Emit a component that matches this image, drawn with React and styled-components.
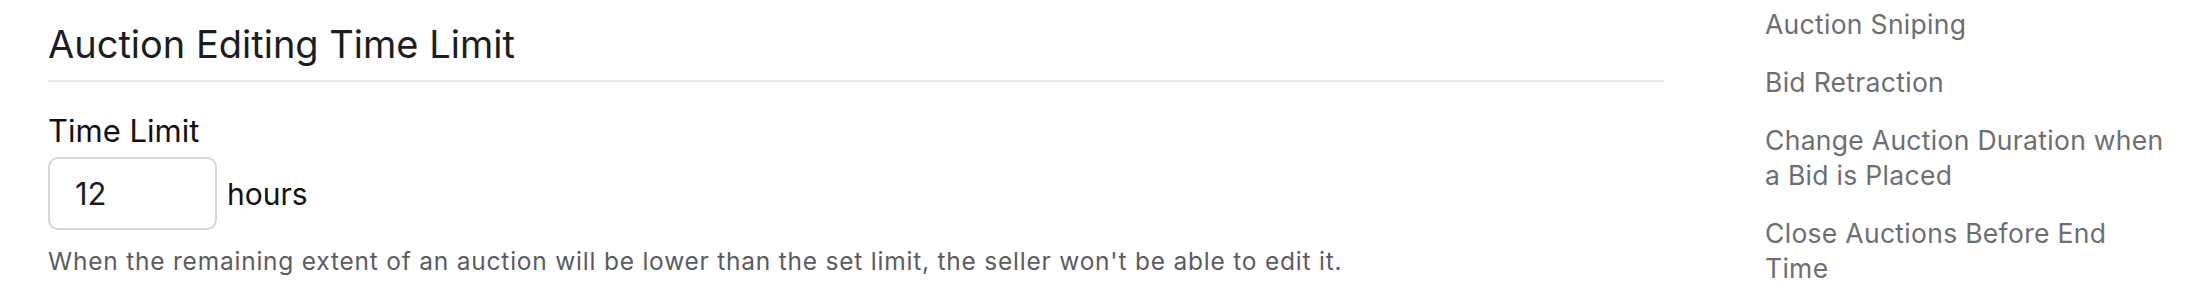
import React from 'react';
import styled, { createGlobalStyle } from 'styled-components';

const Global = createGlobalStyle`
  body {
    margin: 0;
    background: #ffffff;
    font-family: Inter, "Noto Sans", sans-serif;
  }
`;

const Page = styled.div`
  display: flex;
  align-items: flex-start;
  gap: 101px;
  padding: 0 25px 0 48px;
`;

const Main = styled.section`
  flex: 1;
  padding-top: 21px;
`;

const Title = styled.h2`
  margin: 0;
  padding-bottom: 13px;
  border-bottom: 2px solid #e8e8ed;
  font-size: 38px;
  line-height: 46px;
  font-weight: 400;
  color: #1d1d1f;
`;

const Field = styled.div`
  display: flex;
  flex-direction: column;
  margin-top: 30px;
`;

const Label = styled.label`
  font-size: 31px;
  line-height: 38px;
  color: #111113;
`;

const InputRow = styled.div`
  display: flex;
  align-items: center;
  gap: 10px;
  margin-top: 7px;
`;

const NumberInput = styled.input`
  box-sizing: border-box;
  width: 169px;
  height: 73px;
  padding: 0 25px;
  border: 2px solid #d5d7dc;
  border-radius: 10px;
  font-family: inherit;
  font-size: 31px;
  color: #1d1d1f;
  background: #fff;
  outline: none;
`;

const Unit = styled.span`
  font-size: 30px;
  color: #111113;
`;

const Help = styled.p`
  margin: 15px 0 0;
  font-size: 24.5px;
  line-height: 32px;
  letter-spacing: 0.78px;
  color: #5c5c60;
`;

const Sidebar = styled.nav`
  width: 410px;
  flex-shrink: 0;
  display: flex;
  flex-direction: column;
  gap: 23px;
  padding-top: 7px;
`;

const SideLink = styled.a`
  font-size: 26.5px;
  line-height: 35px;
  letter-spacing: 0.3px;
  color: #6d6e72;
  text-decoration: none;
  cursor: pointer;
`;

const links = [
  'Auction Sniping',
  'Bid Retraction',
  'Change Auction Duration when a Bid is Placed',
  'Close Auctions Before End Time',
];

export default function App() {
  return (
    <>
      <Global />
      <Page>
        <Main>
          <Title>Auction Editing Time Limit</Title>
          <Field>
            <Label htmlFor="time-limit">Time Limit</Label>
            <InputRow>
              <NumberInput id="time-limit" type="text" defaultValue="12" />
              <Unit>hours</Unit>
            </InputRow>
          </Field>
          <Help>
            When the remaining extent of an auction will be lower than the set limit, the seller won't be able to edit it.
          </Help>
        </Main>
        <Sidebar>
          {links.map((l) => (
            <SideLink key={l}>{l}</SideLink>
          ))}
        </Sidebar>
      </Page>
    </>
  );
}
